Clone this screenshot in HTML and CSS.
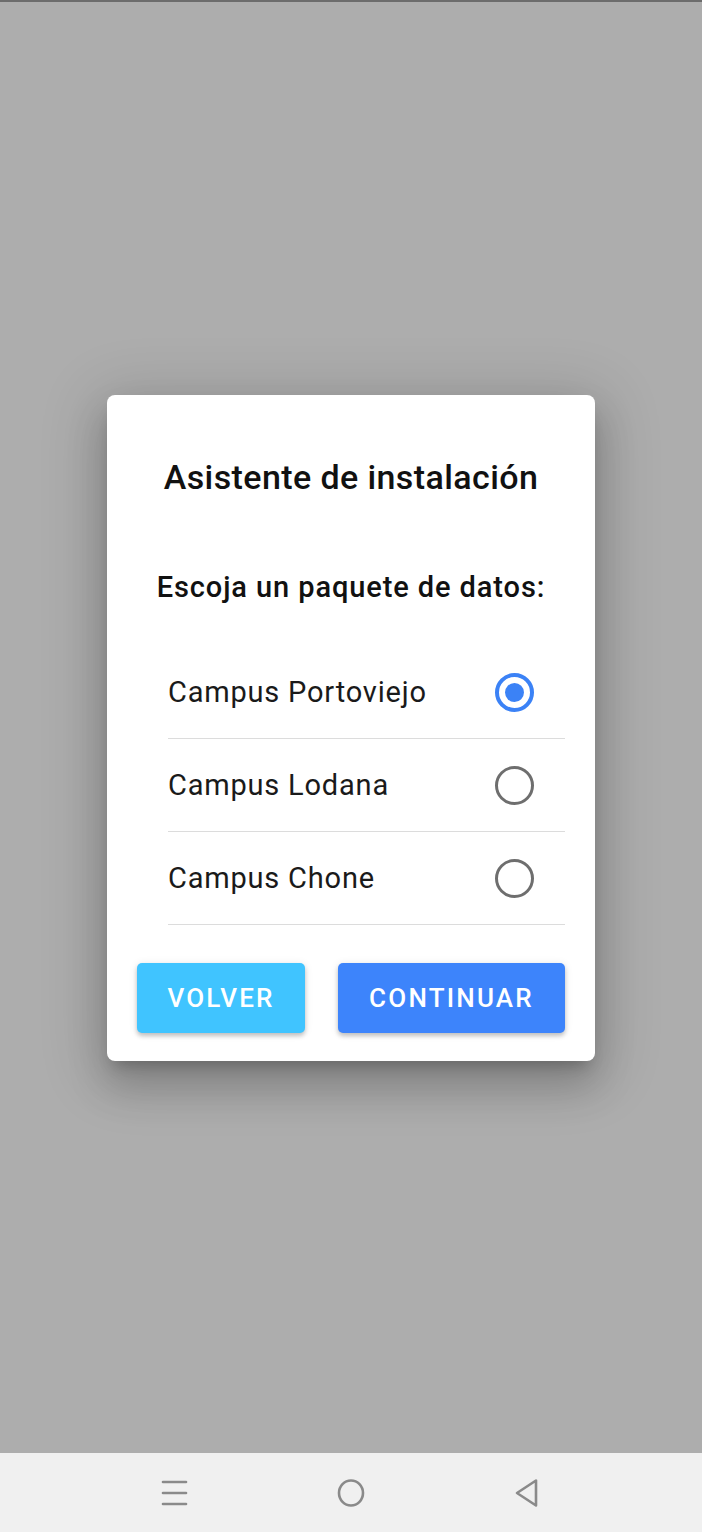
FILE: index.html
```html
<!DOCTYPE html>
<html lang="es">
<head>
<meta charset="utf-8">
<link rel="stylesheet" href="styles.css">
</head>
<body>
<div class="screen">
  <div class="topline"></div>
  <main class="backdrop">
    <section class="dialog">
      <h1 class="title">Asistente de instalación</h1>
      <h2 class="subtitle">Escoja un paquete de datos:</h2>
      <ul class="options">
        <li class="option"><span class="label">Campus Portoviejo</span><span class="radio checked"></span></li>
        <li class="option"><span class="label">Campus Lodana</span><span class="radio"></span></li>
        <li class="option"><span class="label">Campus Chone</span><span class="radio"></span></li>
      </ul>
      <div class="actions">
        <button class="btn btn-back">VOLVER</button>
        <button class="btn btn-next">CONTINUAR</button>
      </div>
    </section>
  </main>
  <nav class="navbar">
    <svg class="nav-icon" width="30" height="30" viewBox="0 0 30 30"><g stroke="#8a8a8a" stroke-width="2.6" stroke-linecap="round"><line x1="3" y1="4" x2="26" y2="4"/><line x1="3" y1="15" x2="26" y2="15"/><line x1="3" y1="26" x2="26" y2="26"/></g></svg>
    <svg class="nav-icon" width="30" height="30" viewBox="0 0 30 30"><ellipse cx="15" cy="15" rx="12" ry="12.5" fill="none" stroke="#8a8a8a" stroke-width="2.6"/></svg>
    <svg class="nav-icon" width="30" height="30" viewBox="0 0 30 30"><path d="M24 2.5 L24 27.5 L5 15 Z" fill="none" stroke="#8a8a8a" stroke-width="2.6" stroke-linejoin="round"/></svg>
  </nav>
</div>
</body>
</html>
```

FILE: styles.css
```css
html, body {
  margin: 0;
  padding: 0;
}
body {
  font-family: Roboto, "Noto Sans", "Liberation Sans", sans-serif;
  background: #adadad;
}
.screen {
  width: 702px;
  height: 1532px;
  display: flex;
  flex-direction: column;
  overflow: hidden;
}
.topline {
  height: 2px;
  background: #6c6c6c;
  flex: none;
}
.backdrop {
  flex: 1;
  background: #adadad;
  display: flex;
  justify-content: center;
  align-items: flex-start;
  padding-top: 393px;
}
.dialog {
  width: 488px;
  height: 666px;
  box-sizing: border-box;
  background: #ffffff;
  border-radius: 8px;
  box-shadow: 0 24px 38px 3px rgba(0,0,0,0.16), 0 9px 60px 12px rgba(0,0,0,0.14), 0 11px 15px -7px rgba(0,0,0,0.22);
  padding: 62px 30px 28px 30px;
  display: flex;
  flex-direction: column;
}
.title {
  margin: 0;
  font-size: 34px;
  line-height: 40px;
  font-weight: 500;
  letter-spacing: 0.4px;
  color: #111;
  text-align: center;
}
.subtitle {
  margin: 72px 0 0 0;
  font-size: 29px;
  line-height: 36px;
  font-weight: 500;
  letter-spacing: 0.9px;
  color: #111;
  text-align: center;
}
.options {
  list-style: none;
  margin: 41px 0 0 31px;
  padding: 0;
}
.option {
  height: 92px;
  border-bottom: 1.5px solid #dcdcdc;
  display: flex;
  align-items: center;
  justify-content: space-between;
  padding-right: 31px;
}
.label {
  font-size: 29px;
  letter-spacing: 0.8px;
  color: #1a1a1a;
  font-weight: 400;
}
.radio {
  width: 39px;
  height: 39px;
  box-sizing: border-box;
  border-radius: 50%;
  border: 3.2px solid #6e6e6e;
  display: flex;
  align-items: center;
  justify-content: center;
}
.radio.checked {
  border-color: #3b82f6;
  border-width: 4px;
}
.radio.checked::after {
  content: "";
  width: 19px;
  height: 19px;
  border-radius: 50%;
  background: #3b82f6;
}
.actions {
  margin-top: 38px;
  display: flex;
  justify-content: space-between;
}
.btn {
  height: 70px;
  border: none;
  border-radius: 5px;
  color: #fff;
  font-family: Roboto, "Noto Sans", sans-serif;
  font-size: 26px;
  font-weight: 500;
  letter-spacing: 2.2px;
  box-shadow: 0 3px 4px rgba(0,0,0,0.2), 0 1px 8px rgba(0,0,0,0.1);
  padding: 0;
}
.btn-back {
  width: 168px;
  background: #40c4ff;
}
.btn-next {
  width: 227px;
  background: #3d84fb;
}
.navbar {
  height: 79px;
  flex: none;
  background: #f0f0f0;
  display: flex;
  justify-content: center;
  align-items: center;
  gap: 146px;
}
.nav-icon {
  display: block;
}
```
